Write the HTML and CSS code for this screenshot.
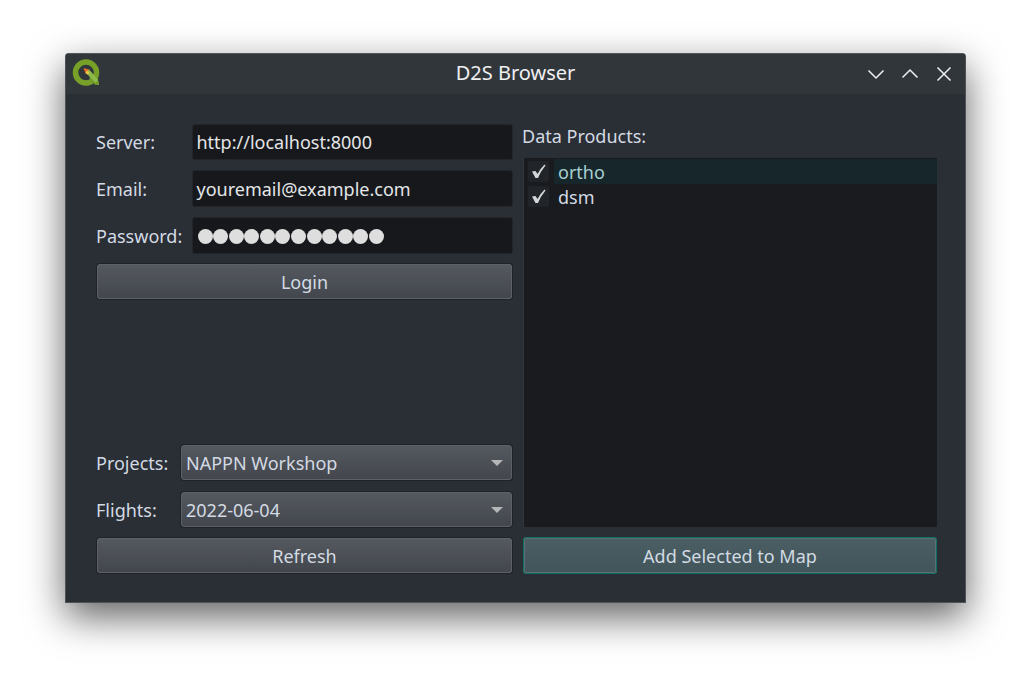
FILE: index.html
```html
<!DOCTYPE html>
<html lang="en">
  <head>
    <meta charset="UTF-8" />
    <meta name="viewport" content="width=device-width, initial-scale=1.0" />
    <title>D2S Browser</title>
    <link rel="stylesheet" href="styles.css">
  </head>
  <body>
    <div class="window">
      <div class="titlebar">
        <svg class="app-icon" viewBox="0 0 30 30" width="30" height="30">
          <circle cx="15" cy="13.5" r="10.5" fill="none" stroke="#76a028" stroke-width="5.5" />
          <path d="M18 19 L23 25 Q24 26 26 26 L28 26 L28 23 L22 17 Z" fill="#6f9a2a" />
          <path d="M16 11 L18 10.5 L27.5 21 L24.5 24 L15 14 Z" fill="#8dbb4a" />
          <path d="M12.5 9 L18 10.5 L15 15.5 Z" fill="#e5702a" />
          <path d="M16 11.5 L18.5 13.5 L17 15.5 L14.5 14 Z" fill="#eccb45" />
        </svg>
        <span class="title">D2S Browser</span>
        <div class="win-buttons">
          <svg viewBox="0 0 18 18" width="18" height="18"><path d="M1.5 5.5 L9 13 L16.5 5.5" /></svg>
          <svg viewBox="0 0 18 18" width="18" height="18"><path d="M1.5 12.5 L9 5 L16.5 12.5" /></svg>
          <svg viewBox="0 0 18 18" width="18" height="18"><path d="M2.5 2.5 L15.5 15.5 M15.5 2.5 L2.5 15.5" /></svg>
        </div>
      </div>
      <div class="content">
        <div class="col-left">
          <div class="login-form">
            <div class="row">
              <label class="login-label">Server:</label>
              <div class="field">http://localhost:8000</div>
            </div>
            <div class="row">
              <label class="login-label">Email:</label>
              <div class="field">youremail@example.com</div>
            </div>
            <div class="row">
              <label class="login-label">Password:</label>
              <div class="field dots">
                <i></i><i></i><i></i><i></i><i></i><i></i><i></i><i></i><i></i><i></i><i></i><i></i>
              </div>
            </div>
            <button type="button" class="btn">Login</button>
          </div>
          <div class="project-form">
            <div class="row">
              <label class="combo-label">Projects:</label>
              <div class="combo">NAPPN Workshop<span class="arrow"></span></div>
            </div>
            <div class="row">
              <label class="combo-label">Flights:</label>
              <div class="combo">2022-06-04<span class="arrow"></span></div>
            </div>
            <button type="button" class="btn">Refresh</button>
          </div>
        </div>
        <div class="col-right">
          <div class="list-title">Data Products:</div>
          <div class="list">
            <div class="item">
              <span class="check"><svg viewBox="0 0 21 21" width="21" height="21"><path d="M4 10.5 L7.5 10 L9.5 13 Q12 8 16.5 3.5 L17.5 4.5 Q12.5 10.5 10 17 L7.5 17 Z" /></svg></span>
              <span class="item-text current">ortho</span>
            </div>
            <div class="item">
              <span class="check"><svg viewBox="0 0 21 21" width="21" height="21"><path d="M4 10.5 L7.5 10 L9.5 13 Q12 8 16.5 3.5 L17.5 4.5 Q12.5 10.5 10 17 L7.5 17 Z" /></svg></span>
              <span class="item-text">dsm</span>
            </div>
          </div>
          <button type="button" class="btn primary">Add Selected to Map</button>
        </div>
      </div>
    </div>
  </body>
</html>
```

FILE: styles.css
```css
* {
  box-sizing: border-box;
}
html,
body {
  height: 100%;
}
body {
  margin: 0;
  padding: 53px 66px 0 65px;
  background-color: #ffffff;
  font-family: "Noto Sans", sans-serif;
  font-size: 18px;
  color: #d3dae3;
  overflow: hidden;
}
.window {
  width: 901px;
  height: 550px;
  background-color: #2a2e35;
  border: 1px solid #4f5256;
  border-top-color: #555;
  border-radius: 4px 4px 0 0;
  box-shadow: 0 14px 38px rgba(0, 0, 0, 0.62);
  display: flex;
  flex-direction: column;
}
.titlebar {
  height: 40px;
  flex: none;
  background-color: #31363b;
  display: flex;
  align-items: center;
  justify-content: space-between;
  padding: 0 12px 0 5px;
  position: relative;
}
.app-icon {
  display: block;
}
.title {
  position: absolute;
  left: 0;
  right: 0;
  top: 5px;
  line-height: 28px;
  text-align: center;
  font-size: 20px;
  color: #eff0f1;
}
.win-buttons {
  display: flex;
  gap: 16px;
}
.win-buttons svg {
  display: block;
}
.win-buttons path {
  fill: none;
  stroke: #eff0f1;
  stroke-width: 1.5;
}
.content {
  flex: 1;
  display: flex;
  gap: 11px;
  padding: 30px 28px 28px 31px;
}
.col-left {
  width: 415px;
  display: flex;
  flex-direction: column;
  justify-content: space-between;
}
.col-right {
  width: 414px;
  display: flex;
  flex-direction: column;
}
.login-form,
.project-form {
  display: flex;
  flex-direction: column;
}
.project-form {
  margin-bottom: 1px;
}
.row {
  display: flex;
  align-items: center;
}
.login-form .row {
  height: 37px;
  margin-bottom: 10px;
}
.login-form .row:first-child {
  height: 36px;
}
.project-form .row {
  height: 35px;
  margin-bottom: 11px;
}
.project-form .row:first-child {
  margin-bottom: 12px;
}
.login-label {
  width: 96px;
  margin-left: -1px;
  flex: none;
}
.combo-label {
  width: 85px;
  margin-left: -1px;
  flex: none;
}
.field {
  flex: 1;
  height: 100%;
  margin-right: -1px;
  background-color: #16181c;
  border: 1px solid #22252a;
  border-radius: 3px;
  padding: 0 3.5px;
  display: flex;
  align-items: center;
  color: #e4e6e8;
}
.dots {
  gap: 0.6px;
  padding: 2px 4.5px 0;
}
.dots i {
  width: 15px;
  height: 15px;
  border-radius: 50%;
  background-color: #dedede;
}
.combo {
  flex: 1;
  height: 100%;
  background-image: linear-gradient(#54595f, #43474d);
  border: 1px solid #5d6166;
  box-shadow: 0 0 0 1px #1f2227;
  border-radius: 3px;
  padding: 0 6px 0 4px;
  display: flex;
  align-items: center;
  justify-content: space-between;
  color: #d3dae3;
}
.arrow {
  width: 0;
  height: 0;
  border-left: 6px solid transparent;
  border-right: 6px solid transparent;
  border-top: 6px solid #b4b6b8;
  margin-right: 2px;
}
.btn {
  height: 35px;
  font: inherit;
  color: #d3dae3;
  background-image: linear-gradient(#54595f, #43474d);
  border: 1px solid #5d6166;
  box-shadow: 0 0 0 1px #1f2227;
  border-radius: 3px;
  padding: 0;
}
.primary {
  height: 37px;
  margin-top: 10px;
  background-image: linear-gradient(#4a5e64, #41555a);
  border-color: #0f6e62;
  box-shadow: inset 0 0 0 1px #5c7074;
  color: #d3dae3;
}
.list-title {
  height: 34px;
  line-height: 24px;
  margin-left: -1px;
}
.list {
  flex: 1;
  background-color: #191b1f;
  border-left: 1px solid #33373d;
  padding: 1px 0 0 1px;
}
.item {
  height: 25px;
  display: flex;
  align-items: center;
  padding-left: 3px;
}
.check {
  width: 21px;
  height: 21px;
  flex: none;
  background-color: #212429;
  border-radius: 2px;
  margin-right: 5px;
}
.check svg {
  display: block;
  fill: #d4d6d8;
}
.item-text {
  flex: 1;
  height: 25px;
  line-height: 27px;
  padding-left: 4px;
  color: #d3dae3;
}
.current {
  background-color: #16262a;
  color: #a7cfd1;
}
```
